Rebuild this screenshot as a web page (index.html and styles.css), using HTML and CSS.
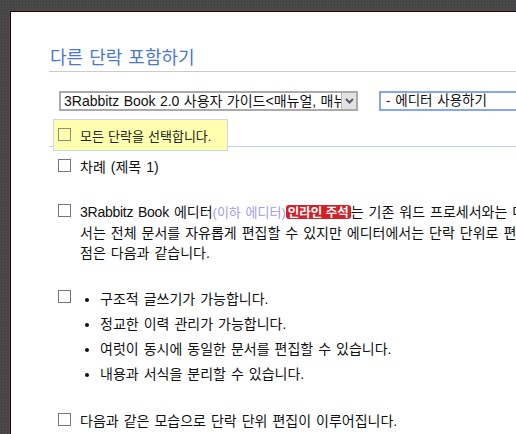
FILE: index.html
```html
<!DOCTYPE html>
<html lang="ko">
<head>
<meta charset="utf-8">
<title>다른 단락 포함하기</title>
<link rel="stylesheet" href="styles.css">
</head>
<body>
<div class="panel">
  <h1 class="title">다른 단락 포함하기</h1>

  <div class="controls">
    <div class="select">
      <span class="select-text">3Rabbitz Book 2.0 사용자 가이드&lt;매뉴얼, 매뉴얼&gt;</span>
      <span class="select-btn">
        <svg width="9" height="6" viewBox="0 0 9 6"><polyline points="1,1 4.5,4.5 8,1" fill="none" stroke="#5a5a5a" stroke-width="2"/></svg>
      </span>
    </div>
    <div class="input">- 에디터 사용하기</div>
  </div>

  <div class="selectall-bar">
    <label class="selectall">
      <span class="check check-clear"></span>
      <span>모든 단락을 선택합니다.</span>
    </label>
  </div>

  <div class="rows">
    <div class="row row-1">
      <span class="check"></span>
      <div class="content">차례 (제목 1)</div>
    </div>

    <div class="row row-2">
      <span class="check"></span>
      <div class="content para"><span class="latin">3Rabbitz Book</span> 에디터<span class="aside">(이하 에디터)</span><span class="badge">인라인 주석</span>는 기존 워드 프로세서와는 다른 방식으로 문서를 편집합니다. 기존 워드 프로세서에<br>서는 전체 문서를 자유롭게 편집할 수 있지만 에디터에서는 단락 단위로 편집합니다. 에디터의 장<br>점은 다음과 같습니다.</div>
    </div>

    <div class="row row-3">
      <span class="check"></span>
      <ul class="content bullets">
        <li>구조적 글쓰기가 가능합니다.</li>
        <li>정교한 이력 관리가 가능합니다.</li>
        <li>여럿이 동시에 동일한 문서를 편집할 수 있습니다.</li>
        <li>내용과 서식을 분리할 수 있습니다.</li>
      </ul>
    </div>

    <div class="row row-4">
      <span class="check"></span>
      <div class="content">다음과 같은 모습으로 단락 단위 편집이 이루어집니다.</div>
    </div>
  </div>
</div>
</body>
</html>
```

FILE: styles.css
```css
html, body {
  margin: 0;
  padding: 0;
  height: 100%;
  overflow: hidden;
}

body {
  background-color: #484848;
  background-image: radial-gradient(#3b3b3b 0.8px, transparent 1px);
  background-size: 3px 3px;
  font-family: "Liberation Sans", "Noto Sans CJK KR", sans-serif;
  font-size: 14px;
  color: #111;
}

.panel {
  margin: 11px 0 0 10px;
  border-top: 1px solid #120a0a;
  border-left: 1px solid #120a0a;
  box-shadow: -1px -1px 0 0 #6a3c3c;
  background: #fff;
  min-height: 600px;
  width: 1000px;
  padding-left: 38px;
}

.title {
  margin: 0;
  padding-top: 32px;
  padding-bottom: 3px;
  border-bottom: 1px solid #cbcbcb;
  font-size: 18px;
  line-height: 24px;
  font-weight: normal;
  color: #4a78cc;
  font-family: "Noto Sans CJK KR", sans-serif;
  padding-left: 1px;
  word-spacing: 1px;
}

.controls {
  display: flex;
  margin-top: 19px;
  height: 20px;
}

.select {
  display: flex;
  box-sizing: border-box;
  margin-left: 10px;
  width: 299px;
  height: 20px;
  border: 2px solid #aaaaaa;
  background: #fff;
}

.select-text {
  flex: 1;
  overflow: hidden;
  white-space: nowrap;
  padding-left: 3px;
  line-height: 16px;
  font-size: 14px;
  word-spacing: 0.5px;
}

.select-btn {
  box-sizing: border-box;
  width: 15px;
  height: 16px;
  border-left: 1px solid #b5b5b5;
  background: #e2e2e2;
  display: flex;
  align-items: center;
  justify-content: center;
  flex-shrink: 0;
}

.input {
  box-sizing: border-box;
  margin-left: 21px;
  width: 220px;
  flex-shrink: 0;
  height: 20px;
  border: 2px solid #88a6f0;
  padding-left: 5px;
  line-height: 16px;
  white-space: nowrap;
  font-size: 13.5px;
  word-spacing: 1px;
}

.selectall-bar {
  box-sizing: border-box;
  height: 36px;
  padding-top: 8px;
  border-bottom: 1px solid #b9d6f6;
}

.selectall {
  box-sizing: border-box;
  display: flex;
  align-items: center;
  gap: 9px;
  margin-left: 4px;
  width: 175px;
  height: 32px;
  padding-left: 4px;
  background: #ffffb0;
  border: 1px solid #c9d9eb;
  font-size: 13px;
  word-spacing: 0.5px;
  color: #222;
}

.check {
  box-sizing: border-box;
  display: block;
  flex-shrink: 0;
  width: 13px;
  height: 13px;
  border: 1px solid #767676;
  background: #fff;
  margin-top: 2px;
}

.check-clear {
  background: transparent;
  border-color: #8e8e72;
  margin-top: -1px;
}

.rows {
  padding-top: 10px;
  padding-left: 9px;
}

.row {
  display: flex;
  align-items: flex-start;
  gap: 9px;
  line-height: 20px;
  white-space: nowrap;
}

.row-1 { margin-bottom: 25px; }
.row-2 { margin-bottom: 24px; }
.row-3 { margin-bottom: 24px; }

.row-3 .check { margin-top: 3px; }

.content {
  word-spacing: 1.1px;
}

.latin {
  letter-spacing: -0.25px;
}

.aside {
  color: #a49cf2;
  font-size: 13px;
}

.badge {
  display: inline-block;
  background: #d42026;
  color: #fff;
  font-weight: bold;
  border-radius: 3px;
  padding: 0 2px;
  line-height: 14px;
  font-size: 12.5px;
  font-family: "Noto Sans CJK KR", sans-serif;
  word-spacing: 0;
}

.bullets {
  margin: 0;
  padding: 0;
  list-style: none;
}

.bullets li {
  position: relative;
  line-height: 25px;
  padding-left: 20px;
}

.bullets li::before {
  content: "";
  position: absolute;
  left: 5px;
  top: 11px;
  width: 4px;
  height: 4px;
  border-radius: 50%;
  background: #111;
}
```
